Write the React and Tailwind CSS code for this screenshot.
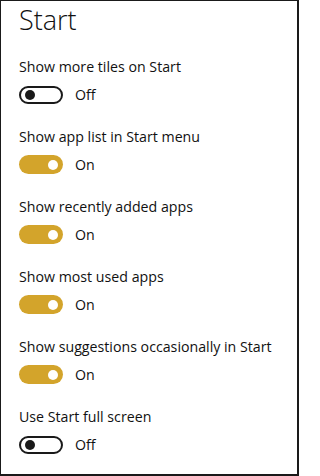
import React from "react";

const settings = [
  { label: "Show more tiles on Start", on: false },
  { label: "Show app list in Start menu", on: true },
  { label: "Show recently added apps", on: true },
  { label: "Show most used apps", on: true },
  { label: "Show suggestions occasionally in Start", on: true },
  { label: "Use Start full screen", on: false },
];

const Toggle = ({ on }) =>
  on ? (
    <div className="w-[44px] h-[19px] rounded-full bg-[#d3a42b] flex items-center justify-end pr-[5px]">
      <div className="w-[10px] h-[10px] rounded-full bg-white" />
    </div>
  ) : (
    <div className="w-[44px] h-[18px] rounded-full border-2 border-[#1a1a1a] bg-white flex items-center pl-[4px]">
      <div className="w-[10px] h-[10px] rounded-full bg-[#1a1a1a]" />
    </div>
  );

export default function App() {
  return (
    <div
      className="w-[299px] h-[476px] bg-white border-t border-l border-r-2 border-b-2 border-[#1a1a1a] pl-[18px] text-[#111]"
      style={{ fontFamily: '"Open Sans", "Noto Sans", sans-serif' }}
    >
      {/* Header */}
      <h1 className="text-[27px] font-light leading-none pt-[5px] h-[55px]">Start</h1>

      {/* Toggles */}
      <div className="flex flex-col">
        {settings.map((s, i) => (
          <div key={i} className="h-[70px] flex flex-col">
            <p className="text-[14.2px] leading-[18px] pt-[2px]">{s.label}</p>
            <div className="h-[19px] flex items-center gap-[12px] mt-[9px]">
              <Toggle on={s.on} />
              <span className="text-[14.2px]">{s.on ? "On" : "Off"}</span>
            </div>
          </div>
        ))}
      </div>
    </div>
  );
}
